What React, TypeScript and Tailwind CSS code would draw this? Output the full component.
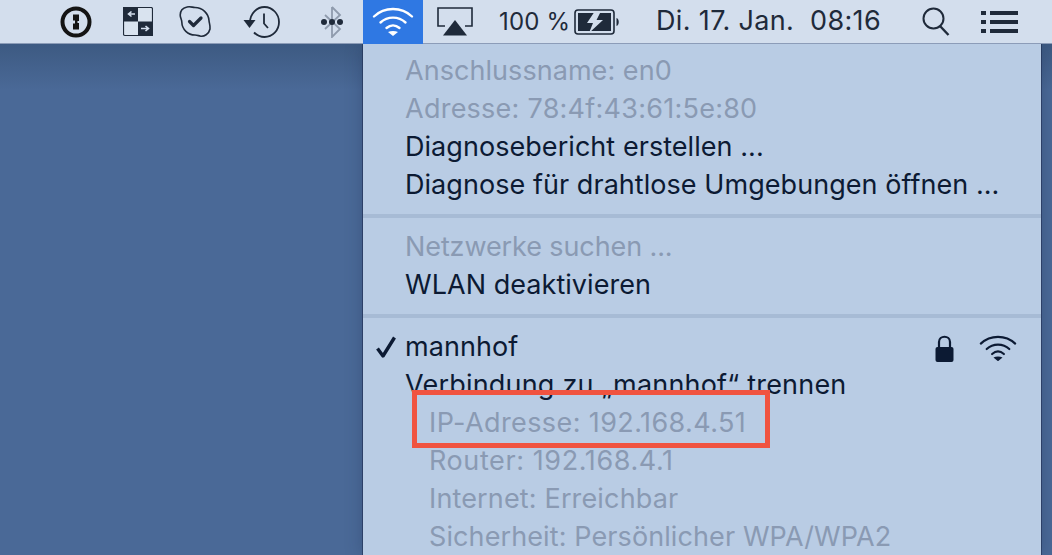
import React from "react";

const DISABLED = "text-[#8a9ab3]";
const ENABLED = "text-[#0c1a33]";

function Row({ children, muted, indent, track }: { children: React.ReactNode; muted?: boolean; indent?: boolean; track?: string }) {
  return (
    <div className={`h-[38px] leading-[38px] whitespace-nowrap ${indent ? "pl-[66px]" : "pl-[42px]"} ${muted ? DISABLED : ENABLED} ${track ?? ""}`}>
      {children}
    </div>
  );
}

function Separator() {
  return <div className="h-1 my-[10px] bg-[#a7bbd5]" />;
}

function WifiIcon({ className, color, width }: { className?: string; color: string; width: number }) {
  return (
    <svg className={`shrink-0 ${className ?? ""}`} width={width} height={(width * 29) / 42} viewBox="0 0 42 29" fill="none" stroke={color} strokeWidth="2.4" strokeLinecap="round">
      <path d="M2 9.5C12.5 -0.5 29.5 -0.5 40 9.5" />
      <path d="M8.5 15.5C15.5 9 26.5 9 33.5 15.5" />
      <path d="M14.5 21C18.5 17.5 23.5 17.5 27.5 21" />
      <path d="M21 29L16 25C19 23.5 23 23.5 26 25Z" fill={color} stroke="none" />
    </svg>
  );
}

function MenuBar() {
  return (
    <div className="relative z-10 h-[44px] flex items-center bg-[#d3deed] border-b border-[#8c9cb8] text-[#1f2a3a] text-[27px] font-['Inter',sans-serif] tracking-[0.35px]">
      <div className="w-[60px] shrink-0" />
      {/* 1password */}
      <svg className="shrink-0" width="32" height="32" viewBox="0 0 32 32">
        <circle cx="16" cy="16" r="13.5" fill="none" stroke="#141414" strokeWidth="4" />
        <path d="M13 8.5H19V15H17.5V17H19V23.5H13V17.5H15V14.5H13Z" fill="#141414" />
      </svg>
      <div className="w-[31px] shrink-0" />
      {/* checker box */}
      <svg className="shrink-0" width="30" height="30" viewBox="0 0 30 30">
        <rect x="0.5" y="0.5" width="29" height="28" rx="1.5" fill="#fff" fillOpacity="0.15" stroke="#1f2a3a" strokeWidth="1.2" />
        <rect x="0" y="0" width="15" height="14.5" fill="#1f2a3a" />
        <rect x="15" y="14.5" width="15" height="14.5" fill="#1f2a3a" />
        <path d="M12 7H6M8.5 4.5L5.5 7L8.5 9.5M18 21.5H25M22.5 19L25.5 21.5L22.5 24" fill="none" stroke="#d3deed" strokeWidth="1.6" />
      </svg>
      <div className="w-[26px] shrink-0" />
      {/* skype check */}
      <svg className="shrink-0" width="33" height="33" viewBox="0 0 33 33" fill="none" stroke="#1f2a3a">
        <path d="M8 2C11 1 13.5 2.5 16 2.5C23.5 2.5 29.5 8.5 30 15.5C30 18 31.5 20 31 24C30 29 25 32 21 31C19 30.5 18 30 16 30C9 30 3 24.5 2.8 17C2.8 14.5 1.2 13 1.2 10C1.2 6 4 3 8 2Z" strokeWidth="1.6" />
        <path d="M10.5 16.5L14.5 20.5L22 13" strokeWidth="3.2" strokeLinecap="round" strokeLinejoin="round" />
      </svg>
      <div className="w-[31px] shrink-0" />
      {/* time machine */}
      <svg className="shrink-0" width="38" height="34" viewBox="0 0 38 34" fill="none" stroke="#1f2a3a" strokeWidth="1.8">
        <path d="M7 17.5C7 8.5 14 2 21.5 2C29.5 2 36 9 36 17C36 25.5 29.5 32 21.5 32C17 32 13.5 30 11 27.5" />
        <path d="M21 8.5V18.5L25 23" />
        <path d="M0.5 15H12.5L6.5 23Z" fill="#1f2a3a" stroke="none" />
      </svg>
      <div className="w-[40px] shrink-0" />
      {/* bluetooth */}
      <svg className="shrink-0" width="22" height="32" viewBox="0 0 22 32" fill="none">
        <path d="M11 1V31L19 23L4 9M11 1L19 9L4 23" stroke="#8f9bad" strokeWidth="1.8" />
        <circle cx="3" cy="16" r="3" fill="#1f2a3a" />
        <circle cx="11" cy="16" r="3" fill="#1f2a3a" />
        <circle cx="19" cy="16" r="3" fill="#1f2a3a" />
      </svg>
      <div className="w-[20px] shrink-0" />
      <div className="w-[60px] h-[44px] shrink-0 bg-[#2f78e3] flex items-center justify-center">
        <WifiIcon color="#ffffff" width={42} />
      </div>
      <div className="w-[14px] shrink-0" />
      {/* airplay */}
      <svg className="shrink-0" width="36" height="29" viewBox="0 0 36 29" fill="none">
        <path d="M8 19H1V1H35V19H28" stroke="#1f2a3a" strokeWidth="1.6" />
        <path d="M18 13L30 28.5H6Z" fill="#1f2a3a" />
      </svg>
      <div className="w-[26px] shrink-0" />
      <span className="w-[66px] shrink-0 text-[24px] tracking-[0.2px] whitespace-nowrap">100 %</span>
      <div className="w-[9px] shrink-0" />
      {/* battery */}
      <svg className="shrink-0" width="46" height="28" viewBox="0 0 46 28" fill="none">
        <rect x="1" y="2" width="39" height="24" rx="3" stroke="#1f2a3a" strokeWidth="1.6" />
        <rect x="4" y="5" width="33" height="18" fill="#1f2a3a" />
        <path d="M42.5 10C45.5 11 45.5 17 42.5 18Z" fill="#1f2a3a" />
        <path d="M21 3L13 15H19L15 25L29 12H22.5L27 3Z" fill="#d3deed" />
      </svg>
      <div className="w-[36px] shrink-0" />
      <span className="w-[224px] shrink-0 whitespace-nowrap">Di. 17. Jan.&nbsp; 08:16</span>
      <div className="w-[42px] shrink-0" />
      {/* search */}
      <svg className="shrink-0" width="28" height="30" viewBox="0 0 28 30" fill="none" stroke="#1f2a3a" strokeWidth="2">
        <circle cx="11.5" cy="11.5" r="10" />
        <path d="M18 19L26.5 28" strokeWidth="2.4" />
      </svg>
      <div className="w-[31px] shrink-0" />
      {/* menu list */}
      <svg className="shrink-0" width="37" height="24" viewBox="0 0 37 24" fill="#1f2a3a">
        <rect x="0" y="1" width="5" height="4" />
        <rect x="9" y="1" width="28" height="4" />
        <rect x="0" y="10" width="5" height="4" />
        <rect x="9" y="10" width="28" height="4" />
        <rect x="0" y="19" width="5" height="4" />
        <rect x="9" y="19" width="28" height="4" />
      </svg>
    </div>
  );
}

export default function App() {
  return (
    <div className="relative w-[1052px] h-[555px] overflow-hidden bg-[linear-gradient(180deg,#3d5a82_44px,#4a6997_90px)] font-['Inter',sans-serif]">
      <MenuBar />
      <div className="ml-[363px] w-[678px] h-[511px] pt-[8px] bg-[#b9cce4] text-[27px] tracking-[0.05px] shadow-[0_0_0_1px_rgba(30,45,80,0.6),0_0_16px_rgba(30,45,80,0.35)]">
        <Row muted>Anschlussname: en0</Row>
        <Row muted track="tracking-[0.25px]">Adresse: 78:4f:43:61:5e:80</Row>
        <Row>Diagnosebericht erstellen ...</Row>
        <Row>Diagnose für drahtlose Umgebungen öffnen ...</Row>
        <Separator />
        <Row muted track="tracking-[-0.1px]">Netzwerke suchen ...</Row>
        <Row>WLAN deaktivieren</Row>
        <Separator />
        <div className={`relative h-[38px] leading-[38px] pl-[42px] ${ENABLED}`}>
          <svg className="absolute left-[12px] top-[8px]" width="22" height="22" viewBox="0 0 22 22" fill="none">
            <path d="M2.5 12.5L8 20L19.5 1.5" stroke="#0c1a33" strokeWidth="3.4" strokeLinejoin="round" />
          </svg>
          mannhof
          <div className="absolute left-[571px] top-[6px] flex items-center gap-[24px]">
            <svg className="shrink-0" width="21" height="28" viewBox="0 0 21 28" fill="none">
              <path d="M5 13V8C5 1 16 1 16 8V13" stroke="#0c1a33" strokeWidth="2.2" />
              <rect x="1.5" y="13" width="18" height="15" rx="2" fill="#0c1a33" />
            </svg>
            <WifiIcon color="#0c1a33" width={38} />
          </div>
        </div>
        <Row track="tracking-[0.2px]">Verbindung zu „mannhof“ trennen</Row>
        <Row muted indent track="tracking-[0.4px]">IP-Adresse: 192.168.4.51</Row>
        <Row muted indent track="tracking-[0.6px]">Router: 192.168.4.1</Row>
        <Row muted indent track="tracking-[0.15px]">Internet: Erreichbar</Row>
        <Row muted indent track="tracking-[0.1px]">Sicherheit: Persönlicher WPA/WPA2</Row>
      </div>
      {/* red annotation box */}
      <div className="absolute left-[412px] top-[390px] w-[358px] h-[58px] border-[5px] border-[#f05340]" />
    </div>
  );
}
